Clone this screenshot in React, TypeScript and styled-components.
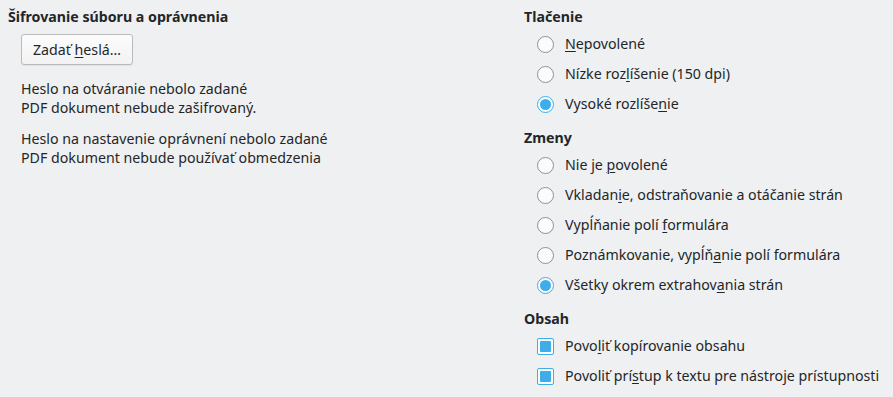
import React from 'react';
import styled, { createGlobalStyle } from 'styled-components';

const colors = {
  bg: '#eff0f1',
  text: '#232629',
  accent: '#3daee9',
  frame: '#8e9091',
};

const GlobalStyle = createGlobalStyle`
  html, body {
    margin: 0;
    padding: 0;
    background: ${colors.bg};
  }
  body {
    font-family: "Noto Sans", "Open Sans", sans-serif;
    font-size: 14.2px;
    color: ${colors.text};
  }
`;

const Page = styled.div`
  width: 893px;
  height: 397px;
  box-sizing: border-box;
  padding: 7px 8px 0 8px;
  display: grid;
  grid-template-columns: 516px 1fr;
  overflow: hidden;
`;

const Column = styled.div`
  display: flex;
  flex-direction: column;
  gap: 9px;
`;

const Section = styled.section`
  display: flex;
  flex-direction: column;
  gap: 2px;
`;

const Heading = styled.div`
  font-weight: 700;
  line-height: 20px;
  height: 20px;
`;

const Button = styled.button`
  align-self: flex-start;
  margin: 5px 0 0 13px;
  height: 31px;
  padding: 0 11px;
  font: inherit;
  color: ${colors.text};
  background: linear-gradient(#fcfcfc, #f2f2f3);
  border: 1px solid #b9bbbc;
  border-radius: 3px;
  box-shadow: 0 1px 1px rgba(0, 0, 0, 0.06);
`;

const Info = styled.div`
  display: flex;
  flex-direction: column;
  gap: 12px;
  margin: 12px 0 0 13px;
`;

const Paragraph = styled.p`
  margin: 0;
  line-height: 19px;
`;

const Options = styled.div`
  display: flex;
  flex-direction: column;
  padding-left: 13px;
`;

const OptionRow = styled.label`
  display: flex;
  align-items: center;
  gap: 11px;
  height: 30px;
  line-height: 20px;
`;

const RadioMark = styled.span<{ $checked?: boolean }>`
  box-sizing: border-box;
  width: 17px;
  height: 17px;
  border-radius: 50%;
  background: #fcfcfc;
  border: 1px solid ${({ $checked }) => ($checked ? colors.accent : colors.frame)};
  display: flex;
  align-items: center;
  justify-content: center;
  &::after {
    content: '';
    display: ${({ $checked }) => ($checked ? 'block' : 'none')};
    width: 11px;
    height: 11px;
    border-radius: 50%;
    background: ${colors.accent};
  }
`;

const CheckMark = styled.span`
  box-sizing: border-box;
  width: 17px;
  height: 17px;
  border-radius: 2px;
  background: #fcfcfc;
  border: 1px solid ${colors.accent};
  display: flex;
  align-items: center;
  justify-content: center;
  &::after {
    content: '';
    width: 11px;
    height: 11px;
    border-radius: 1px;
    background: ${colors.accent};
  }
`;

const Key = styled.span`
  text-decoration: underline;
  text-underline-offset: 2px;
  text-decoration-thickness: 1px;
`;

// label with a mnemonic: text before, the underlined letter, text after
function Mnemonic({ text, at }: { text: string; at: number }) {
  return (
    <span>
      {text.slice(0, at)}
      <Key>{text[at]}</Key>
      {text.slice(at + 1)}
    </span>
  );
}

interface OptionProps {
  text: string;
  at?: number;
  checked?: boolean;
}

function Radio({ text, at, checked }: OptionProps) {
  return (
    <OptionRow>
      <RadioMark $checked={checked} />
      {at === undefined ? <span>{text}</span> : <Mnemonic text={text} at={at} />}
    </OptionRow>
  );
}

function Check({ text, at }: OptionProps) {
  return (
    <OptionRow>
      <CheckMark />
      {at === undefined ? <span>{text}</span> : <Mnemonic text={text} at={at} />}
    </OptionRow>
  );
}

export default function App() {
  return (
    <>
      <GlobalStyle />
      <Page>
        <Column>
          <Section>
            <Heading>Šifrovanie súboru a oprávnenia</Heading>
            <Button>
              <Mnemonic text="Zadať heslá…" at={6} />
            </Button>
            <Info>
              <Paragraph>
                Heslo na otváranie nebolo zadané
                <br />
                PDF dokument nebude zašifrovaný.
              </Paragraph>
              <Paragraph>
                Heslo na nastavenie oprávnení nebolo zadané
                <br />
                PDF dokument nebude používať obmedzenia
              </Paragraph>
            </Info>
          </Section>
        </Column>
        <Column>
          <Section>
            <Heading>Tlačenie</Heading>
            <Options>
              <Radio text="Nepovolené" at={0} />
              <Radio text="Nízke rozlíšenie (150 dpi)" at={9} />
              <Radio text="Vysoké rozlíšenie" at={14} checked />
            </Options>
          </Section>
          <Section>
            <Heading>Zmeny</Heading>
            <Options>
              <Radio text="Nie je povolené" at={7} />
              <Radio text="Vkladanie, odstraňovanie a otáčanie strán" at={7} />
              <Radio text="Vypĺňanie polí formulára" at={15} />
              <Radio text="Poznámkovanie, vypĺňanie polí formulára" at={20} />
              <Radio text="Všetky okrem extrahovania strán" at={21} checked />
            </Options>
          </Section>
          <Section>
            <Heading>Obsah</Heading>
            <Options>
              <Check text="Povoliť kopírovanie obsahu" at={4} />
              <Check text="Povoliť prístup k textu pre nástroje prístupnosti" at={11} />
            </Options>
          </Section>
        </Column>
      </Page>
    </>
  );
}
